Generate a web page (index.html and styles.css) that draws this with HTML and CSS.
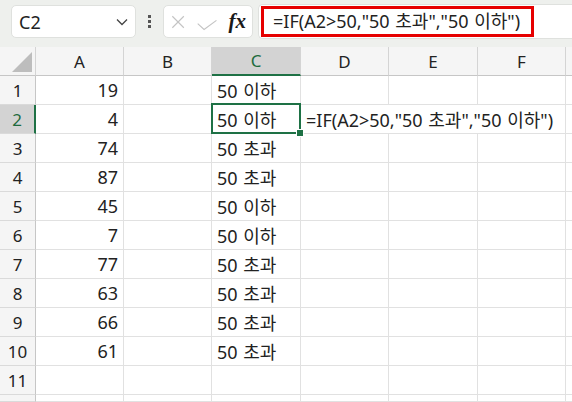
FILE: index.html
```html
<!DOCTYPE html>
<html lang="ko">
  <head>
    <meta charset="UTF-8" />
    <title>IF 함수 - 50 초과 / 50 이하</title>
    <link rel="stylesheet" href="styles.css">
  </head>
  <body>
    <!-- Barre de formule -->
    <div class="toolbar">
      <div class="namebox">
        <span>C2</span>
        <svg class="chevron" width="12" height="8" viewBox="0 0 12 8"><polyline points="1,1.5 6,6.5 11,1.5" fill="none" stroke="#444" stroke-width="1.3"/></svg>
      </div>
      <div class="dots"><i></i><i></i><i></i></div>
      <div class="fxbox">
        <svg width="16" height="16" viewBox="0 0 16 16"><path d="M1.5 1.5 L14.5 14.5 M14.5 1.5 L1.5 14.5" stroke="#c4c4c4" stroke-width="1.3" fill="none"/></svg>
        <svg class="check" width="23" height="12" viewBox="0 0 23 12"><polyline points="0.8,4.5 8,11 22,0.8" stroke="#c4c4c4" stroke-width="1.3" fill="none"/></svg>
        <span class="fx">fx</span>
      </div>
      <div class="formula">
        <span class="formula-text">=IF(A2&gt;50,"50 초과","50 이하")</span>
      </div>
    </div>

    <!-- Feuille -->
    <div class="sheet">
      <div class="row head">
        <div class="corner"><span class="tri"></span></div>
        <div>A</div><div>B</div><div class="sel-col">C</div><div>D</div><div>E</div><div>F</div><div></div>
      </div>
      <div class="row"><div class="rh">1</div><div class="num">19</div><div></div><div>50 이하</div><div></div><div></div><div></div><div></div></div>
      <div class="row"><div class="rh sel-row">2</div><div class="num">4</div><div></div><div class="active">50 이하<span class="outline"></span><span class="handle"></span></div><div class="span3">=IF(A2&gt;50,"50 초과","50 이하")</div><div></div></div>
      <div class="row"><div class="rh">3</div><div class="num">74</div><div></div><div>50 초과</div><div></div><div></div><div></div><div></div></div>
      <div class="row"><div class="rh">4</div><div class="num">87</div><div></div><div>50 초과</div><div></div><div></div><div></div><div></div></div>
      <div class="row"><div class="rh">5</div><div class="num">45</div><div></div><div>50 이하</div><div></div><div></div><div></div><div></div></div>
      <div class="row"><div class="rh">6</div><div class="num">7</div><div></div><div>50 이하</div><div></div><div></div><div></div><div></div></div>
      <div class="row"><div class="rh">7</div><div class="num">77</div><div></div><div>50 초과</div><div></div><div></div><div></div><div></div></div>
      <div class="row"><div class="rh">8</div><div class="num">63</div><div></div><div>50 초과</div><div></div><div></div><div></div><div></div></div>
      <div class="row"><div class="rh">9</div><div class="num">66</div><div></div><div>50 초과</div><div></div><div></div><div></div><div></div></div>
      <div class="row"><div class="rh">10</div><div class="num">61</div><div></div><div>50 초과</div><div></div><div></div><div></div><div></div></div>
      <div class="row"><div class="rh">11</div><div></div><div></div><div></div><div></div><div></div><div></div><div></div></div>
      <div class="row last"><div class="rh"></div><div></div><div></div><div></div><div></div><div></div><div></div><div></div></div>
    </div>
  </body>
</html>
```

FILE: styles.css
```css
/* Base */
body {
  margin: 0;
  width: 572px;
  height: 402px;
  overflow: hidden;
  background: #ffffff;
  font-family: "Noto Sans", "Noto Sans CJK KR", sans-serif;
  color: #222222;
}

/* Barre de formule */
.toolbar {
  display: flex;
  align-items: center;
  height: 47px;
  padding: 5px 0 9px 11px;
  box-sizing: border-box;
  background: #eef0ed;
}

.namebox {
  display: flex;
  align-items: center;
  justify-content: space-between;
  width: 125px;
  height: 33px;
  box-sizing: border-box;
  padding: 0 7px 0 7px;
  background: #ffffff;
  border: 1px solid #dfe1de;
  border-radius: 5px;
  font-size: 18px;
  color: #222222;
}

.dots {
  display: flex;
  flex-direction: column;
  gap: 2px;
  margin: 0 12px 0 12px;
}

.dots i {
  display: block;
  width: 3px;
  height: 3px;
  background: #555555;
}

.fxbox {
  display: flex;
  align-items: center;
  width: 90px;
  height: 33px;
  box-sizing: border-box;
  padding: 0 6px 0 7px;
  gap: 10px;
  background: #ffffff;
  border: 1px solid #dfe1de;
  border-radius: 5px;
}

.check {
  margin-top: 6px;
  margin-left: 2px;
}

.fx {
  font-family: "Liberation Serif", serif;
  font-style: italic;
  font-weight: bold;
  font-size: 21px;
  color: #1a1a1a;
  margin-left: 1px;
}

.formula {
  flex: 1;
  display: flex;
  align-items: center;
  height: 33px;
  margin-left: 5px;
  background: #ffffff;
  border: 1px solid #dfe1de;
  border-right: none;
  border-radius: 5px 0 0 5px;
}

.formula-text {
  display: inline-block;
  height: 31px;
  line-height: 25px;
  box-sizing: border-box;
  padding: 0 11px 0 9px;
  margin-left: 2px;
  border: 3px solid #e60000;
  font-size: 18px;
  word-spacing: 1px;
  white-space: nowrap;
}

/* Feuille */
.row {
  display: grid;
  grid-template-columns: 36px 88px 88px 89px 88px 89px 88px 1fr;
  width: 572px;
  height: 29px;
}

.row > div {
  display: flex;
  align-items: center;
  box-sizing: border-box;
  padding: 0 5px;
  border-right: 1px solid #e1e1e1;
  border-bottom: 1px solid #e1e1e1;
  font-size: 18px;
  word-spacing: 1px;
  white-space: nowrap;
}

.last {
  height: 7px;
  overflow: hidden;
}

.head > div {
  justify-content: center;
  background: #f5f5f5;
  border-right-color: #d4d4d4;
  border-bottom-color: #c6c6c6;
  color: #222222;
  font-size: 17px;
}

.corner {
  position: relative;
}

.tri {
  position: absolute;
  right: 3px;
  bottom: 3px;
  width: 0;
  height: 0;
  border-left: 20px solid transparent;
  border-bottom: 20px solid #bdbdbd;
}

.rh {
  justify-content: center;
  background: #f5f5f5;
  font-size: 17px !important;
  border-right-color: #c6c6c6 !important;
  border-bottom-color: #dadada !important;
}

.num {
  justify-content: flex-end;
}

.sel-col {
  background: #d3d3d3 !important;
  color: #1e6b3e !important;
  border-bottom: 2px solid #1e7145 !important;
}

.sel-row {
  background: #d3d3d3 !important;
  color: #1e6b3e;
  border-right: 2px solid #1e7145 !important;
}

.span3 {
  grid-column: span 3;
}

/* Cellule active */
.active {
  position: relative;
}

.outline {
  position: absolute;
  top: -2px;
  left: -1px;
  right: -1px;
  bottom: -1px;
  border: 2px solid #1e7145;
}

.handle {
  position: absolute;
  right: -4px;
  bottom: -4px;
  width: 6px;
  height: 6px;
  background: #1e7145;
  border: 1px solid #ffffff;
}
```
